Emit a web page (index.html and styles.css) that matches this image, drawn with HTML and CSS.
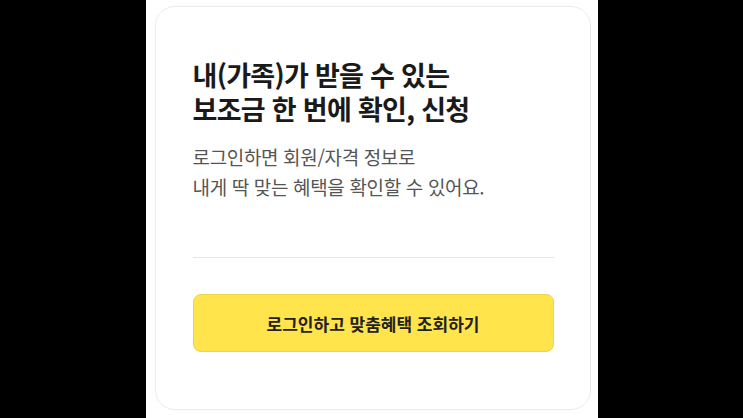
FILE: index.html
```html
<!DOCTYPE html>
<html lang="ko">
<head>
<meta charset="utf-8">
<link rel="stylesheet" href="styles.css">
</head>
<body>
<div class="panel">
  <div class="card">
    <h1 class="title">내(가족)가 받을 수 있는<br>보조금 한 번에 확인, 신청</h1>
    <p class="desc">로그인하면 회원/자격 정보로<br>내게 딱 맞는 혜택을 확인할 수 있어요.</p>
    <hr class="divider">
    <button class="cta">로그인하고 맞춤혜택 조회하기</button>
  </div>
</div>
</body>
</html>
```
FILE: styles.css
```css
html, body {
  margin: 0;
  padding: 0;
  background: #000;
  height: 100%;
}
body {
  display: flex;
  justify-content: center;
  font-family: "Noto Sans CJK KR", "Noto Sans", sans-serif;
}
.panel {
  width: 452px;
  height: 418px;
  background: #fff;
  padding: 6px 7px 8px 9px;
  box-sizing: border-box;
}
.card {
  height: 100%;
  box-sizing: border-box;
  border: 1px solid #ebebeb;
  border-radius: 20px;
  padding: 51px 36px 0 37px;
  display: flex;
  flex-direction: column;
}
.title {
  margin: 0;
  font-size: 27px;
  line-height: 34px;
  font-weight: 700;
  color: #1a1a1a;
  letter-spacing: -0.7px;
}
.desc {
  margin: 16px 0 0;
  font-size: 19px;
  line-height: 30px;
  font-weight: 400;
  color: #555;
  letter-spacing: -0.35px;
}
.divider {
  margin: 55px 0 0;
  border: 0;
  height: 1px;
  background: #e6e6e6;
}
.cta {
  margin-top: 36px;
  height: 58px;
  border: 1px solid #ecd34a;
  border-radius: 8px;
  background: #ffe44c;
  font-family: inherit;
  font-size: 17px;
  font-weight: 700;
  color: #222;
  letter-spacing: 0;
  padding: 0;
}
```
